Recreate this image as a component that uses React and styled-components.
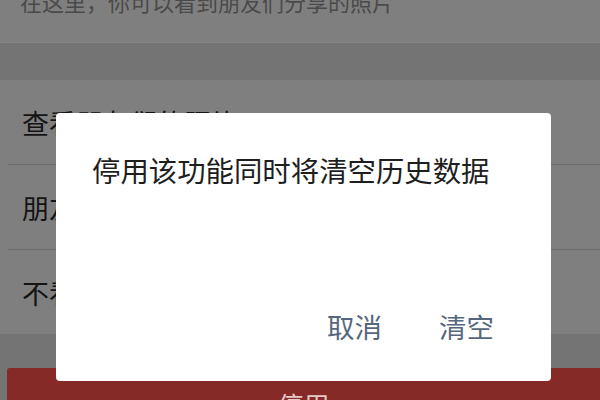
import React from 'react';
import styled, { createGlobalStyle } from 'styled-components';

const GlobalStyle = createGlobalStyle`
  html, body {
    margin: 0;
    padding: 0;
    width: 600px;
    height: 400px;
    overflow: hidden;
    background: #747474;
    font-family: "Noto Sans CJK SC", "Noto Sans", sans-serif;
  }
`;

const Page = styled.div`
  width: 600px;
  height: 400px;
  overflow: hidden;
  display: flex;
  flex-direction: column;

  & > * {
    flex-shrink: 0;
  }
`;

const Intro = styled.div`
  height: 42px;
  background: #7f7f7f;
  padding-left: 20px;
  overflow: hidden;
  border-bottom: 1px solid #858585;
`;

const IntroText = styled.div`
  margin-top: -14px;
  font-size: 22px;
  line-height: 30px;
  color: #4a4a4a;
  white-space: nowrap;
`;

const Band = styled.div`
  height: 37px;
  background: #747474;
`;

const List = styled.div`
  background: #7f7f7f;
  padding-left: 8px;
`;

const Row = styled.div`
  height: 84px;
  display: flex;
  align-items: center;
  padding-left: 14px;
  font-size: 27px;
  color: #141414;
  border-bottom: ${p => (p.last ? 'none' : '1px solid #6c6c6c')};
`;

const Footer = styled.div`
  background: #747474;
  padding: 34px 0 0 7px;
`;

const DangerButton = styled.div`
  height: 60px;
  background: #862a27;
  border-radius: 3px 0 0 3px;
  display: flex;
  justify-content: center;
  padding-top: 18px;
  font-size: 26px;
  color: #e8c9c8;
`;

const Overlay = styled.div`
  position: fixed;
  inset: 0;
`;

const Dialog = styled.div`
  position: absolute;
  left: 56px;
  top: 113px;
  width: 495px;
  height: 268px;
  background: #fff;
  border-radius: 4px;
  display: flex;
  flex-direction: column;
  box-sizing: border-box;
  padding: 39px 57px 37px 36px;
`;

const Title = styled.div`
  font-size: 28.4px;
  line-height: 36px;
  color: #1e1e1e;
  white-space: nowrap;
`;

const Actions = styled.div`
  margin-top: auto;
  display: flex;
  justify-content: flex-end;
  gap: 57px;
`;

const Action = styled.div`
  font-size: 27.5px;
  line-height: 36px;
  color: #56677d;
`;

export default function App() {
  return (
    <>
      <GlobalStyle />
      <Page>
        <Intro>
          <IntroText>在这里，你可以看到朋友们分享的照片</IntroText>
        </Intro>
        <Band />
        <List>
          <Row>查看朋友们的照片</Row>
          <Row>朋友圈的照片</Row>
          <Row last>不看他们的照片</Row>
        </List>
        <Footer>
          <DangerButton>停用</DangerButton>
        </Footer>
      </Page>
      <Overlay>
        <Dialog>
          <Title>停用该功能同时将清空历史数据</Title>
          <Actions>
            <Action>取消</Action>
            <Action>清空</Action>
          </Actions>
        </Dialog>
      </Overlay>
    </>
  );
}
